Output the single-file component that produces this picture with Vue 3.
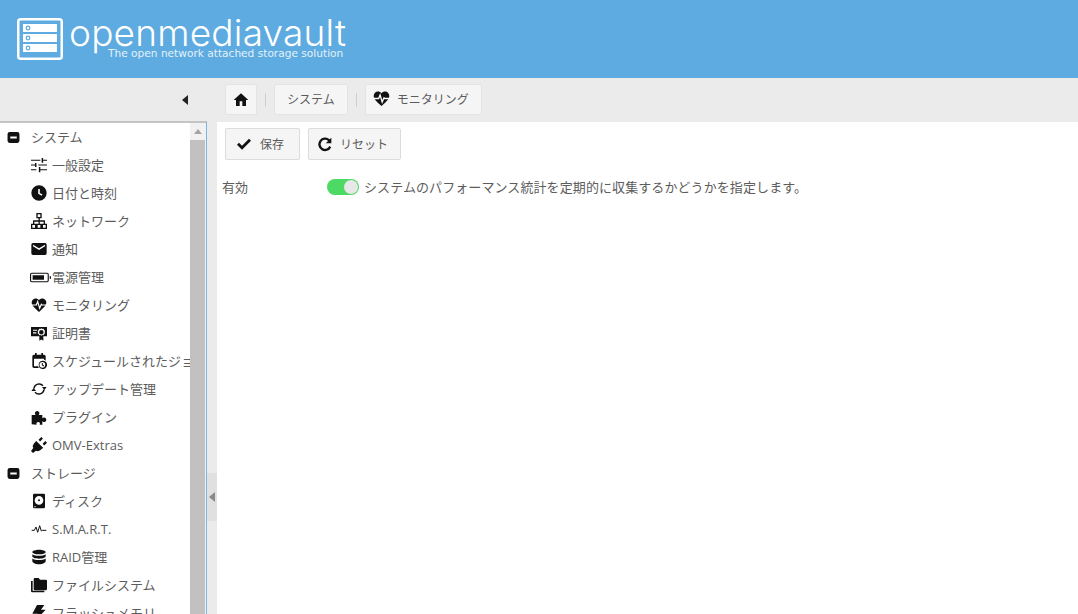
<template>
  <div class="page">
    <header class="banner">
      <svg class="logo-mark" viewBox="0 0 46 42">
        <rect x="1.25" y="1.25" width="43.5" height="39.5" rx="2.5" fill="none" stroke="#fff" stroke-width="2.5" />
        <g v-for="y in [6, 16, 26]" :key="y">
          <rect x="6" :y="y" width="34" height="8" fill="#fff" />
          <circle cx="11" :cy="y + 4" r="1.8" fill="none" stroke="#5dabe0" stroke-width="1.2" />
        </g>
      </svg>
      <div class="brand">
        <div class="brand-name">openmediavault</div>
        <div class="brand-sub">The open network attached storage solution</div>
      </div>
    </header>

    <div class="workspace">
      <aside class="sidebar">
        <div class="collapse-bar"><span class="arrow-left"></span></div>
        <div class="tree-wrap">
          <ul class="tree">
            <li v-for="row in rows" :key="row.label" class="row" :class="{ group: row.group, latin: row.latin }">
              <span class="row-icon">
                <svg viewBox="0 0 24 24" :class="row.icon">
                  <path v-if="icons[row.icon].d" :d="icons[row.icon].d" fill-rule="evenodd" />
                  <path v-if="icons[row.icon].cut" :d="icons[row.icon].cut" class="cut" />
                  <path v-if="icons[row.icon].line" :d="icons[row.icon].line" class="line" />
                </svg>
              </span>
              <span class="row-label">{{ row.label }}</span>
            </li>
          </ul>
          <div class="scrollbar">
            <span class="scroll-up"></span>
            <span class="scroll-thumb"></span>
          </div>
        </div>
      </aside>

      <div class="splitter"><span class="splitter-handle"><i></i></span></div>

      <main class="main">
        <nav class="crumbs">
          <button class="crumb home">
            <svg viewBox="0 0 24 24"><path :d="icons.home.d" /></svg>
          </button>
          <span class="crumb-sep"></span>
          <button class="crumb">システム</button>
          <span class="crumb-sep"></span>
          <button class="crumb with-icon">
            <svg viewBox="0 0 24 24">
              <path :d="icons.heartbeat.d" />
              <path :d="icons.heartbeat.cut" class="cut" />
            </svg>
            モニタリング
          </button>
        </nav>

        <section class="content">
          <div class="actions">
            <button class="action save">
              <svg viewBox="0 0 24 24"><path :d="icons.check.d" /></svg>
              保存
            </button>
            <button class="action reset">
              <svg viewBox="0 0 24 24"><path :d="icons.redo.d" /></svg>
              リセット
            </button>
          </div>
          <div class="field">
            <label class="field-label">有効</label>
            <span class="toggle"><i></i></span>
            <span class="field-text">システムのパフォーマンス統計を定期的に収集するかどうかを指定します。</span>
          </div>
        </section>
      </main>
    </div>
  </div>
</template>

<script setup>
const icons = {
  minus: { d: 'M5 2h14a4 4 0 0 1 4 4v12a4 4 0 0 1-4 4H5a4 4 0 0 1-4-4V6a4 4 0 0 1 4-4zM6 10v4h12v-4z' },
  tune: { d: 'M0 18.200v1.600h8v-1.600zM0 4.200v1.600h14V4.200zM14 23v-3.200h10v-1.600H14V15h-2.200v8zM6 9v2.200H0v1.600h6V15h2.200V9zM24 12.800v-1.600H11v1.600zM16 8.500h2.200V5.800H24V4.200h-5.800V1.500H16z' },
  clock: { d: 'M12 0.500a11.500 11.500 0 1 0 0 23 11.500 11.500 0 0 0 0-23zM13.200 6h-2.400v7l5.200 3.200 1.200-1.900-4-2.400z' },
  network: { d: 'M8 0h8v8h-2.800v3H20a1 1 0 0 1 1 1v4h3v8h-8v-8h3v-3h-5.800v3H16v8H8v-8h3.200v-3H5v3h3v8H0v-8h3v-4a1 1 0 0 1 1-1h7.200V8H8zM10 2v4h4V2zM2 18v4h4v-4zM10 18v4h4v-4zM18 18v4h4v-4z' },
  mail: { d: 'M3 3h18a2.500 2.500 0 0 1 2.500 2.500v13A2.500 2.500 0 0 1 21 21H3a2.500 2.500 0 0 1-2.500-2.500v-13A2.500 2.500 0 0 1 3 3zM21 8l-9 5.500L3 8v-2.500l9 5.500 9-5.500z' },
  battery: { d: 'M2 6.500h17.500A2 2 0 0 1 21.500 8.500v7a2 2 0 0 1-2 2H2a2 2 0 0 1-2-2v-7a2 2 0 0 1 2-2zM2 7.800a.7.7 0 0 0-.7.7v7a.7.7 0 0 0 .7.7h17.500a.7.7 0 0 0 .7-.7v-7a.7.7 0 0 0-.7-.7zM3 9.500h13v5H3zM22.500 10.500H24v3h-1.500z' },
  heartbeat: {
    d: 'M12 22.500l-1.600-1.500C4.700 15.900 1 12.500 1 8.300 1 4.900 3.700 2.200 7 2.200c1.900 0 3.800.9 5 2.300 1.200-1.400 3.100-2.300 5-2.300 3.300 0 6 2.700 6 6.100 0 4.200-3.700 7.600-9.400 12.700z',
    cut: 'M1 12h7l2-5 3 10 2.500-6 1 1h7',
  },
  cert: { d: 'M0 3h24v14h-5.500v6.500l-3-1.800-3 1.800V17H0zM3 7v1.800h6V7zM3 11v1.800h5V11zM15.500 4.800l1.500 1.200 1.900-.2.600 1.800 1.600 1.100-.6 1.800.6 1.800-1.600 1.100-.6 1.800-1.900-.2-1.500 1.200-1.500-1.200-1.900.2-.6-1.800-1.600-1.100.6-1.800-.6-1.800 1.600-1.100.6-1.800 1.900.2zM15.500 7.600a3.400 3.400 0 1 0 0 6.800 3.400 3.400 0 0 0 0-6.800z' },
  schedule: {
    d: 'M6 0h2.500v2.500h7V0H18v2.500h1.500A2.500 2.500 0 0 1 22 5v6.500a7.500 7.500 0 0 0-2.500-1.300V8.500h-15V20h6a7.500 7.500 0 0 0 1.300 2.500H4.500A2.500 2.500 0 0 1 2 20V5a2.500 2.500 0 0 1 2.500-2.500H6zM17 11.500a6.300 6.300 0 1 1 0 12.500 6.300 6.300 0 0 1 0-12.500zM17 13.500a4.300 4.300 0 1 0 0 8.600 4.300 4.300 0 0 0 0-8.600zM16.200 15h1.500v2.700l2.100 1.200-.7 1.200-2.900-1.700z',
  },
  sync: {
    d: 'M16.500 9h7l-3.500 4.500zM0.500 15h7L4 10.500z',
    line: 'M4.500 11A7.800 7.800 0 0 1 18 7M19.500 13A7.800 7.800 0 0 1 6 17',
  },
  puzzle: { d: 'M1 23V9h6C5.800 7.500 5.500 5.800 6.500 4.500a3.500 3.500 0 0 1 5.500 0c1 1.300.7 3-.5 4.500H17v5c1.500-1.200 3-1.500 4.500-.5a3.300 3.300 0 0 1 0 5.500c-1.500 1-3 .7-4.500-.5v5h-4c.8-1.800.5-3.500-1.800-4-2.200-.4-3.800 2-2.700 4z' },
  plug: { d: 'M15.500 0l2.400 2.400-4.200 4.200-2.400-2.400zM21.600 6.100L24 8.500l-4.200 4.200-2.400-2.400zM7.500 5.500L18.500 16.500l-1.700.6-2.500 2.500a6 6 0 0 1-6.800 1L3 24l-3-3 3.400-4.500a6 6 0 0 1 1-6.800l2.500-2.500z' },
  disk: { d: 'M5 1h14a2 2 0 0 1 2 2v18a2 2 0 0 1-2 2H5a2 2 0 0 1-2-2V3a2 2 0 0 1 2-2zM12 4.500a6.500 6.500 0 1 0 0 13 6.500 6.500 0 0 0 0-13zM12 9.500a1.500 1.500 0 1 1 0 3 1.500 1.500 0 0 1 0-3zM6 19.500a1 1 0 1 0 0 2 1 1 0 0 0 0-2z' },
  pulse: { line: 'M1 14h4l2.500-5 2.500 8 3-10 2.500 8 1.500-1h6' },
  database: { d: 'M12 1c5.500 0 10 1.600 10 3.500S17.500 8 12 8 2 6.400 2 4.500 6.500 1 12 1zM2 7.800C4 9.400 8 10 12 10s8-.6 10-2.200v3.200c0 1.900-4.500 3.500-10 3.500S2 12.900 2 11zM2 14.300c2 1.600 6 2.200 10 2.200s8-.6 10-2.200v4.200c0 2.200-4.500 4.500-10 4.500S2 20.700 2 18.500z' },
  folders: { d: 'M2.500 6H0v15a2 2 0 0 0 2 2h18v-2.500H2.500zM22 4h-8.500l-2-2.500H6a2 2 0 0 0-2 2V18a2 2 0 0 0 2 2h16a2 2 0 0 0 2-2V6a2 2 0 0 0-2-2z' },
  flash: { d: 'M9 0h11l-5 7h7L6 24l4-11H2z' },
  home: { d: 'M10 21v-7h4v7h5.500v-9H23L12 2 1 12h3.500v9z' },
  check: { d: 'M9 20.500L1.500 13l3-3L9 14.500 19.500 4l3 3z' },
  redo: { d: 'M21.500 2.500v8.300h-8.300l3.400-3.400A6.700 6.700 0 1 0 18.400 15l3 1.800A10.200 10.200 0 1 1 19 4.900z' },
}

const rows = [
  { label: 'システム', icon: 'minus', group: true },
  { label: '一般設定', icon: 'tune' },
  { label: '日付と時刻', icon: 'clock' },
  { label: 'ネットワーク', icon: 'network' },
  { label: '通知', icon: 'mail' },
  { label: '電源管理', icon: 'battery' },
  { label: 'モニタリング', icon: 'heartbeat' },
  { label: '証明書', icon: 'cert' },
  { label: 'スケジュールされたジョブ', icon: 'schedule' },
  { label: 'アップデート管理', icon: 'sync' },
  { label: 'プラグイン', icon: 'puzzle' },
  { label: 'OMV-Extras', icon: 'plug', latin: true },
  { label: 'ストレージ', icon: 'minus', group: true },
  { label: 'ディスク', icon: 'disk' },
  { label: 'S.M.A.R.T.', icon: 'pulse', latin: true },
  { label: 'RAID管理', icon: 'database' },
  { label: 'ファイルシステム', icon: 'folders' },
  { label: 'フラッシュメモリ', icon: 'flash' },
]
</script>

<style>
html,
body {
  margin: 0;
  overflow: hidden;
}
</style>

<style scoped>
.page {
  display: flex;
  flex-direction: column;
  height: 614px;
  overflow: hidden;
  background: #ebebeb;
  font-family: "Open Sans", "Noto Sans CJK JP", sans-serif;
  font-size: 13px;
  color: #555;
}

/* banner */
.banner {
  display: flex;
  flex: none;
  align-items: flex-start;
  height: 78px;
  padding: 18px 0 0 17px;
  box-sizing: border-box;
  background: #5dabe0;
  color: #fff;
}
.logo-mark {
  width: 46px;
  height: 42px;
  flex: none;
}
.brand {
  margin-left: 6px;
  width: 290px;
}
.brand-name {
  font-family: Inter, sans-serif;
  font-weight: 300;
  font-size: 37px;
  line-height: 30px;
  letter-spacing: 0.2px;
  white-space: nowrap;
}
.brand-sub {
  margin-left: 39px;
  font-family: "DejaVu Sans", sans-serif;
  font-size: 10.6px;
  line-height: 11px;
  white-space: nowrap;
  color: #e4f1fb;
}

.workspace {
  display: flex;
  flex: 1;
  min-height: 0;
}

/* left tree */
.sidebar {
  display: flex;
  flex-direction: column;
  flex: none;
  width: 207px;
}
.collapse-bar {
  display: flex;
  flex: none;
  align-items: center;
  justify-content: flex-end;
  height: 43px;
  padding-right: 19px;
  box-sizing: border-box;
}
.arrow-left {
  border-style: solid;
  border-width: 5px 6px 5px 0;
  border-color: transparent #222 transparent transparent;
}
.tree-wrap {
  display: flex;
  flex: 1;
  min-height: 0;
  border-top: 2px solid #c4c4c4;
  border-right: 1px solid #7fb4dc;
  background: #fff;
}
.tree {
  flex: 1;
  min-width: 0;
  margin: 0;
  padding: 0;
  overflow: hidden;
  list-style: none;
}
.row {
  display: flex;
  align-items: center;
  height: 28px;
  padding-left: 30px;
  white-space: nowrap;
}
.row.group {
  padding-left: 7px;
}
.row-icon {
  display: flex;
  flex: none;
  align-items: center;
  justify-content: flex-start;
  width: 21px;
  height: 16px;
  padding-left: 1px;
}
.row.group .row-icon {
  width: 24px;
  padding-left: 0;
}
.row-icon svg {
  flex: none;
  width: 16px;
  height: 16px;
  fill: #111;
}
.row-icon svg.minus {
  width: 13px;
  height: 13px;
}
.row-icon svg.battery {
  width: 21px;
  height: 21px;
  margin-left: -1px;
}
.row-icon svg.pulse .line {
  stroke-width: 1.5;
}
.row-label {
  padding-bottom: 2px;
  color: #5c5c5c;
}
.row.latin .row-label {
  padding-bottom: 0;
}
.cut {
  fill: none;
  stroke: #fff;
  stroke-width: 1.8;
}
.line {
  fill: none;
  stroke: #111;
  stroke-width: 2.2;
}
.scrollbar {
  display: flex;
  flex: none;
  flex-direction: column;
  align-items: center;
  width: 16px;
  background: #f1f1f1;
}
.scroll-up {
  margin-top: 6px;
  border-style: solid;
  border-width: 0 4px 5px;
  border-color: transparent transparent #a3a3a3;
}
.scroll-thumb {
  flex: 1;
  align-self: stretch;
  margin-top: 6px;
  margin-right: 1px;
  background: #c1c1c1;
}

/* splitter */
.splitter {
  display: flex;
  flex: none;
  align-items: flex-end;
  width: 10px;
  height: 100%;
  padding-bottom: 93px;
  box-sizing: border-box;
  background: #ebebeb;
}
.splitter-handle {
  display: flex;
  align-items: center;
  justify-content: center;
  width: 10px;
  height: 48px;
  background: #e0e0e0;
}
.splitter-handle i {
  border-style: solid;
  border-width: 5px 6px 5px 0;
  border-color: transparent #8a8a8a transparent transparent;
}

/* right side */
.main {
  display: flex;
  flex-direction: column;
  flex: 1;
  min-width: 0;
}
.crumbs {
  display: flex;
  flex: none;
  align-items: flex-start;
  gap: 8px;
  height: 44px;
  padding: 6px 0 0 8px;
  box-sizing: border-box;
}
.crumb {
  display: flex;
  align-items: center;
  height: 31px;
  padding: 0 12px 2px;
  border: 1px solid #e4e4e4;
  border-radius: 2px;
  background: #f5f5f5;
  font: inherit;
  font-size: 12px;
  color: #5c5c5c;
}
.crumb svg {
  flex: none;
  width: 17px;
  height: 17px;
  fill: #111;
}
.crumb.with-icon {
  gap: 7px;
  padding-left: 7px;
}
.crumb.home {
  width: 32px;
  padding: 0;
  justify-content: center;
}
.crumb.home svg {
  width: 16px;
  height: 16px;
}
.crumb-sep {
  width: 1px;
  height: 14px;
  margin-top: 9px;
  background: #cfcfcf;
}
.content {
  flex: 1;
  background: #fff;
}
.actions {
  display: flex;
  gap: 8px;
  padding: 6px 0 0 8px;
}
.action {
  display: flex;
  align-items: center;
  height: 32px;
  padding-bottom: 2px;
  border: 1px solid #dcdcdc;
  border-radius: 2px;
  background: #f5f5f5;
  font: inherit;
  font-size: 12px;
  color: #5c5c5c;
}
.action svg {
  flex: none;
  fill: #111;
}
.action.save {
  gap: 8px;
  padding-left: 10px;
  padding-right: 15px;
}
.action.save svg {
  width: 16px;
  height: 16px;
}
.action.reset {
  gap: 7px;
  padding-left: 8px;
  padding-right: 12px;
}
.action.reset svg {
  width: 16px;
  height: 16px;
}
.field {
  display: flex;
  align-items: center;
  height: 16px;
  margin-top: 19px;
  padding-left: 5px;
  color: #5c5c5c;
}
.field-label {
  width: 105px;
  padding-bottom: 2px;
}
.toggle {
  position: relative;
  flex: none;
  width: 32px;
  height: 16px;
  border-radius: 8px;
  background: #4cd964;
}
.toggle i {
  position: absolute;
  top: 1px;
  right: 1px;
  width: 14px;
  height: 14px;
  border-radius: 50%;
  background: #e8e8e8;
}
.field-text {
  margin-left: 5px;
  padding-bottom: 2px;
  letter-spacing: 0.09px;
  white-space: nowrap;
}
</style>
